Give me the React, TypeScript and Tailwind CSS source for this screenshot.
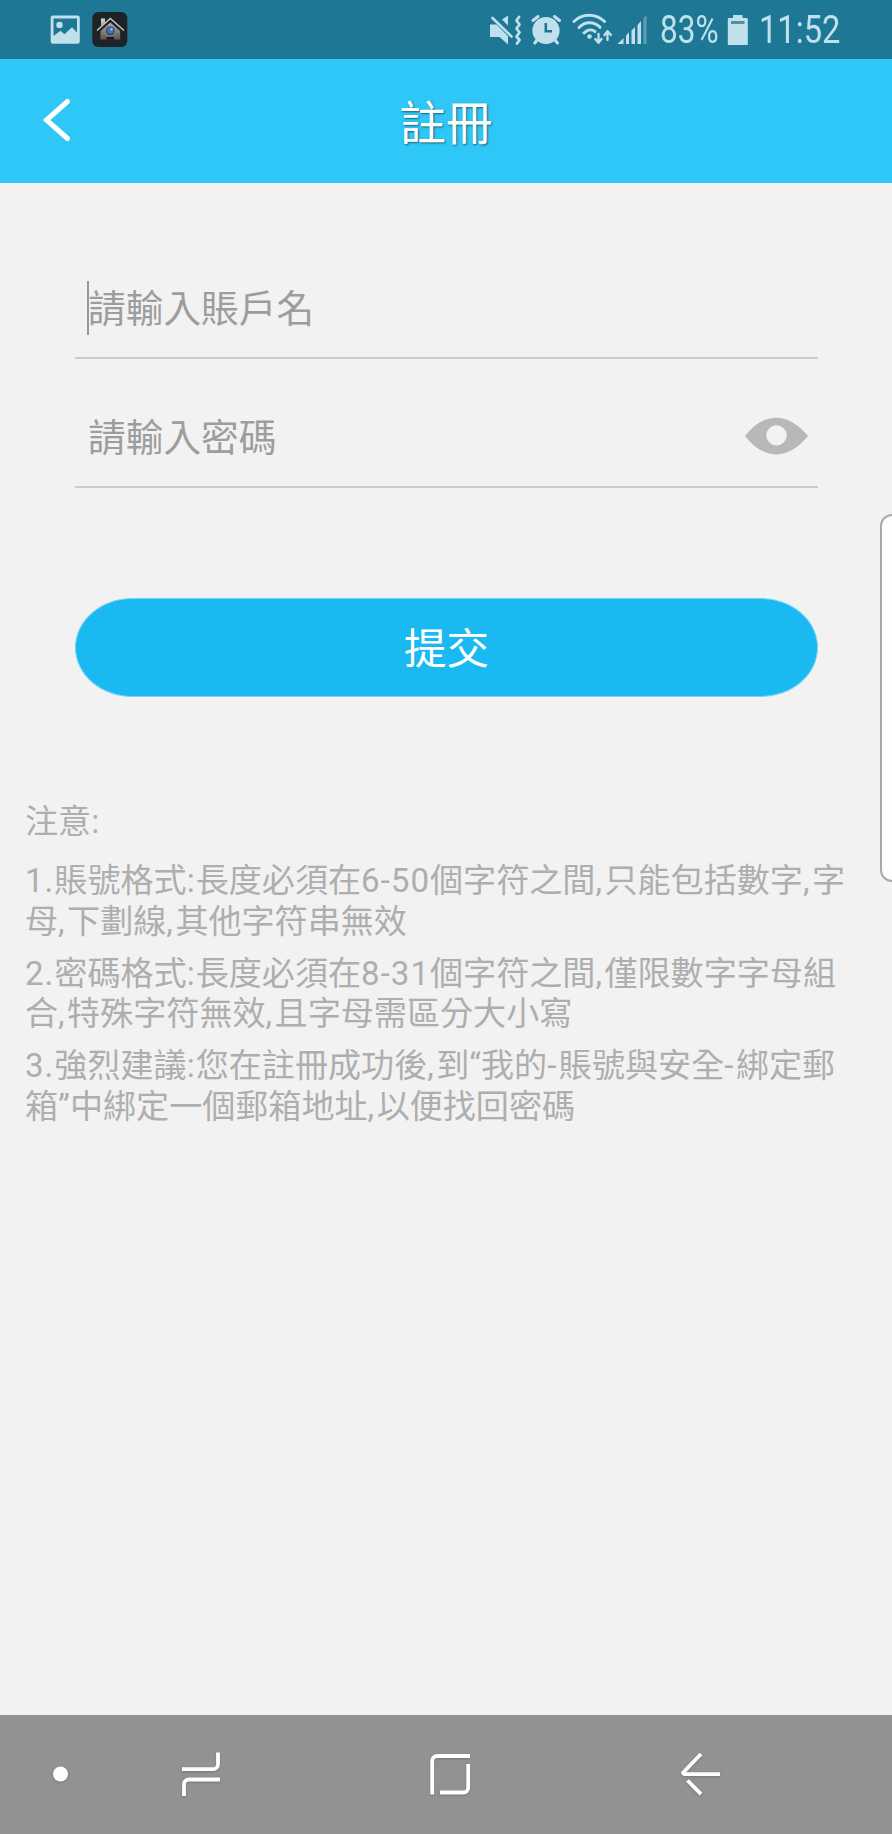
import React from "react";

function PictureIcon() {
  return (
    <svg className="ml-[50px] shrink-0" width="30" height="29" viewBox="50 14 30 29">
      <path fillRule="evenodd" fill="#c0e1ec" d="M53 14.5H77.500a2.300 2.300 0 0 1 2.300 2.300V40.500a2.300 2.300 0 0 1 -2.300 2.300H53a2.300 2.300 0 0 1 -2.300 -2.300V16.800A2.300 2.300 0 0 1 53 14.500ZM53.500 17.500V35L60.500 29.800L64.500 33.300L72 26.300L77 31.500V17.500ZM59.500 20.700a3.200 3.200 0 1 1 0 6.400a3.200 3.200 0 0 1 0 -6.400Z" />
    </svg>
  );
}

function HomeAppIcon() {
  return (
    <svg className="ml-[11px] shrink-0" width="37" height="37" viewBox="91 10.500 37 37">
      <defs>
        <linearGradient id="wall" x1="0" y1="0" x2="0" y2="1">
          <stop offset="0" stopColor="#d8d8d4" />
          <stop offset="0.500" stopColor="#8c8985" />
          <stop offset="1" stopColor="#5d5753" />
        </linearGradient>
      </defs>
      <rect x="92.300" y="11.500" width="35" height="35" rx="6" fill="#1f2226" />
      <path fill="url(#wall)" d="M100.500 29L110.200 20.500L120.200 29V39H100.500ZM101 18H105V22L101 25.500Z" />
      <path fill="none" stroke="#1f2226" strokeWidth="3" d="M97 31.500L110.300 20L124 31.500" />
      <path fill="none" stroke="#c9cac7" strokeWidth="1.400" d="M97 30L110.300 18L124 30" />
      <circle cx="110.300" cy="30.500" r="5" fill="#34455f" stroke="#8d9096" strokeWidth="1" />
      <circle cx="110.300" cy="30" r="3.200" fill="#3f74b4" />
      <circle cx="111.500" cy="28.800" r="1.200" fill="#9fc6ec" />
      <path fill="#171719" d="M106.500 36.500H114V39H106.500Z" />
    </svg>
  );
}

function MuteVibrateIcon() {
  return (
    <svg className="shrink-0" width="34" height="34" viewBox="488 12 34 34">
      <path fill="#c0e1ec" d="M490 23.500H496.500L508 35V43.500L499.500 36H490ZM502 18.500L508 14.500V24.500Z" />
      <path fill="none" stroke="#c0e1ec" strokeWidth="2.600" strokeLinecap="round" d="M492.500 17L511.500 35.500" />
      <path fill="none" stroke="#c0e1ec" strokeWidth="2.800" strokeLinecap="round" strokeLinejoin="round" d="M519 16L516.500 19.500L519.500 23.500L516.500 27.500L519.500 31.500L516.500 35.500L519.500 39L517 42.500" />
    </svg>
  );
}

function AlarmIcon() {
  return (
    <svg className="ml-[9px] shrink-0" width="31" height="34" viewBox="531 12 31 34">
      <circle cx="546" cy="29.500" r="13.600" fill="#c0e1ec" />
      <path fill="none" stroke="#c0e1ec" strokeWidth="3" strokeLinecap="round" d="M533 19.500L538 15.500M559.500 19.500L554.500 15.500M537 39L534.800 42M555 39L557.500 42" />
      <path fill="none" stroke="#1f7796" strokeWidth="2.600" d="M545.800 22V30.300H552" />
    </svg>
  );
}

function WifiIcon() {
  return (
    <svg className="ml-[10px] shrink-0" width="41" height="34" viewBox="572 12 41 34">
      <g fill="none" stroke="#c0e1ec" strokeWidth="3" strokeLinecap="round">
        <path d="M574 20.500C582 12.300 596 12.300 604.500 20.500" />
        <path d="M579 26.500C585 20.300 594 20.300 600 26.300" />
        <path d="M584 32C587.500 28.200 592 28.200 595 30.500" />
      </g>
      <circle cx="589.500" cy="35.500" r="2.300" fill="#c0e1ec" />
      <path fill="none" stroke="#c0e1ec" strokeWidth="2.300" strokeLinecap="round" strokeLinejoin="round" d="M598.500 33V41.500M595.200 38L598.500 41.800L601.500 38M607.500 39V30.500M604.500 34L607.500 30.200L611 34" />
    </svg>
  );
}

function SignalIcon() {
  return (
    <svg className="ml-[4px] shrink-0" width="31" height="34" viewBox="617 12 31 34">
      <path fill="#c0e1ec" d="M617.500 43L623.500 37V43ZM626 34.500L629 31.500V43H626ZM631.500 29.500L635 26V43H631.500ZM637.500 24L641 20V43H637.500Z" />
      <path fill="#5fa0b8" d="M643.500 17.500L646.500 14V43H643.500Z" />
    </svg>
  );
}

function BatteryIcon() {
  return (
    <svg className="ml-[9px] shrink-0" width="22" height="34" viewBox="727 12 22 34">
      <path fill="#c0e1ec" d="M729 17H733V14H742.500V17H746.500A1.300 1.300 0 0 1 747.800 18.300V44H727.800V18.300A1.300 1.300 0 0 1 729 17Z" />
      <path fill="#5a8c9c" d="M731 20H744.500V23H731Z" />
    </svg>
  );
}

function StatusBar() {
  return (
    <div className="flex h-[59px] items-center justify-between bg-[#1f7796] text-[38px] text-[#c0e1ec]">
      <div className="flex items-center">
        <PictureIcon />
        <HomeAppIcon />
      </div>
      <div className="flex h-full items-center pr-[51px]">
        <MuteVibrateIcon />
        <AlarmIcon />
        <WifiIcon />
        <SignalIcon />
        <div className="ml-[12px] w-[58px] pt-[2px] whitespace-nowrap">
          <span className="inline-block origin-left scale-x-[0.83]">83%</span>
        </div>
        <BatteryIcon />
        <div className="ml-[10px] w-[82px] pt-[2px] whitespace-nowrap">
          <span className="inline-block origin-left scale-x-[0.86]">11:52</span>
        </div>
      </div>
    </div>
  );
}

function Header() {
  return (
    <header className="grid h-[124px] grid-cols-[120px_1fr_120px] items-center bg-[#2fc6f8]">
      <button type="button" aria-label="返回" className="pl-[42px]">
        <svg className="mb-[3px] block" width="30" height="46" viewBox="42 97 30 46">
          <path fill="none" stroke="#fff" strokeWidth="5" strokeLinecap="round" d="M67.500 101.500L46.500 120L67.500 138.500" />
        </svg>
      </button>
      <h1 className="pt-[5px] text-center text-[46.500px] leading-[60px] text-white [text-shadow:1px_1px_2px_#00000080]">註冊</h1>
    </header>
  );
}

function EyeIcon() {
  return (
    <svg className="mb-[4px] shrink-0" width="64" height="38" viewBox="744 417 64 38">
      <path fillRule="evenodd" fill="#b8b8b8" d="M745 436C764 411.500 788 411.500 808 436C788 460.500 764 460.500 745 436ZM776.500 425.200a10.200 10.200 0 1 0 0 20.400a10.200 10.200 0 0 0 0 -20.400Z" />
    </svg>
  );
}

function NoteLine({ text }: { text: string }) {
  const runs = text.split(/(\d+-\d+|[\d.]+|[,:-])/).filter(Boolean);
  return (
    <span className="block whitespace-nowrap">
      {runs.map((run, i) => {
        if (run === "," || run === "-") {
          return <span key={i} className="tracking-[2.500px]">{run}</span>;
        }
        if (/^[\d.:-]+$/.test(run)) {
          return <span key={i} className="tracking-[1px]">{run}</span>;
        }
        return run;
      })}
    </span>
  );
}

function Notes() {
  const notes = [
    ["1.賬號格式:長度必須在6-50個字符之間,只能包括數字,字", "母,下劃線,其他字符串無效"],
    ["2.密碼格式:長度必須在8-31個字符之間,僅限數字字母組", "合,特殊字符無效,且字母需區分大小寫"],
    ["3.強烈建議:您在註冊成功後,到“我的-賬號與安全-綁定郵", "箱”中綁定一個郵箱地址,以便找回密碼"],
  ];
  return (
    <section className="mt-[105px] pl-[25px] text-[33.100px] leading-[40.500px] text-[#aeaeae]">
      <p>
        <NoteLine text="注意:" />
      </p>
      <div className="mt-[18.500px] flex flex-col gap-[11.500px]">
        {notes.map((lines) => (
          <p key={lines[0]}>
            {lines.map((line) => (
              <NoteLine key={line} text={line} />
            ))}
          </p>
        ))}
      </div>
    </section>
  );
}

function NavBar() {
  return (
    <nav className="flex h-[119px] items-center bg-[#929292]">
      <svg className="ml-[52px] drop-shadow-[0_1px_1px_#00000030]" width="17" height="17" viewBox="0 0 17 17">
        <circle cx="8.500" cy="8" r="7.500" fill="#fff" />
      </svg>
      <svg className="ml-[111px] drop-shadow-[0_1px_1px_#00000030]" width="44" height="48" viewBox="180 1750.500 44 48" fill="none" stroke="#fff" strokeWidth="3.800">
        <path d="M182 1768.700H213A5 5 0 0 0 218 1763.700V1752M184 1795.500V1784A5 5 0 0 1 189 1779H220" />
      </svg>
      <svg className="ml-[204px] drop-shadow-[0_1px_1px_#00000030]" width="44" height="48" viewBox="428 1750.500 44 48" fill="none" stroke="#fff" strokeWidth="3.800">
        <path d="M432.200 1794V1760.500A5 5 0 0 1 437.200 1755.500H470M468.200 1763.500V1787A5 5 0 0 1 463.200 1792H440" />
      </svg>
      <svg className="ml-[205.500px] drop-shadow-[0_1px_1px_#00000030]" width="44" height="48" viewBox="678 1750.500 44 48" fill="none" stroke="#fff" strokeWidth="3.800" strokeLinejoin="round">
        <path d="M701 1753.500L683 1772.300Q683.500 1774 685 1773.700H720M687.500 1780L701 1793.700" />
      </svg>
    </nav>
  );
}

export default function App() {
  return (
    <div className="relative flex h-[1834px] w-[892px] flex-col overflow-hidden bg-[#f2f2f2] font-['Roboto','Noto_Sans_CJK_TC',sans-serif]">
      <StatusBar />
      <Header />
      <main className="flex-1">
        <form className="pt-[47px] pr-[74px] pl-[75px]" onSubmit={(event) => event.preventDefault()}>
          <div className="flex h-[129px] items-center border-b-2 border-[#cbcbcb] pt-[28px] text-[37.700px] text-[#9d9d9d]">
            <span className="ml-[12px] h-[54px] w-[2px] bg-[#989898]" />
            <span className="-ml-[1px] pt-[3px]">請輸入賬戶名</span>
          </div>
          <div className="flex h-[129px] items-center justify-between border-b-2 border-[#cbcbcb] pt-[30px] pr-[10px] pl-[13px] text-[37.700px] text-[#9d9d9d]">
            <span className="pt-[1px]">請輸入密碼</span>
            <EyeIcon />
          </div>
          <button type="submit" className="mt-[110px] flex h-[99px] w-full items-center justify-center rounded-[58px/50px] border border-[#72d4f7] bg-[#1ab9f2] pt-[4px] text-[42.500px] text-white">
            提交
          </button>
        </form>
        <Notes />
      </main>
      <NavBar />
      <div className="absolute top-[514px] -right-[12px] h-[368px] w-[24px] rounded-[14px] border-2 border-[#a9a9a9] bg-[#fefefe]" />
    </div>
  );
}
